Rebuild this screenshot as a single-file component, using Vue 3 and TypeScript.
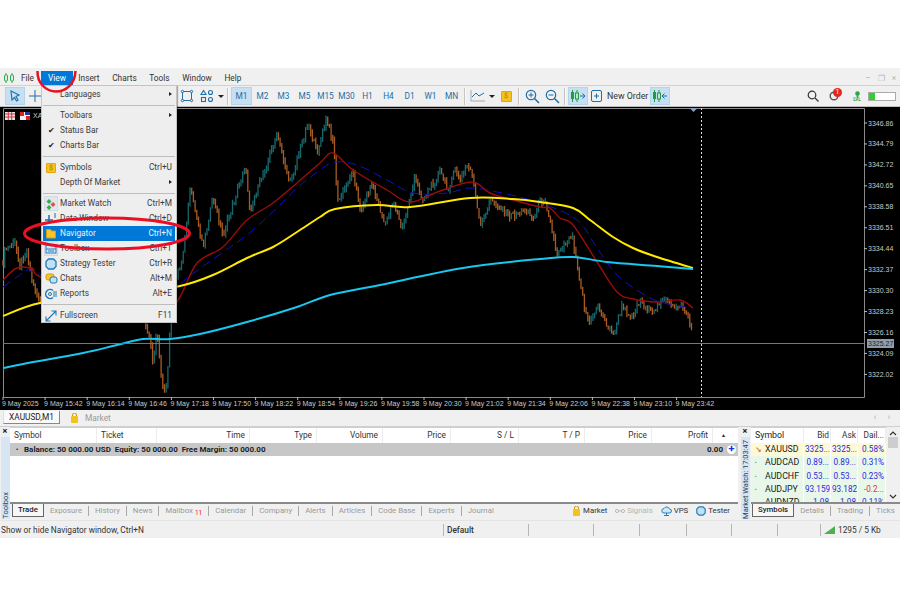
<script setup lang="ts">
type P = [number, number];

const pricePath: P[] = [[3,262],[5,250],[15,243],[20,265],[27,250],[33,285],[40,300],[90,305],[140,312],[150,340],[153,362],[157,330],[162,385],[167,390],[170,325],[178,270],[182,262],[190,190],[203,245],[213,198],[223,236],[245,165],[250,210],[277,135],[290,183],[308,122],[317,153],[326,120],[333,140],[338,203],[353,170],[360,210],[372,184],[385,226],[393,200],[402,230],[415,178],[423,200],[440,171],[447,190],[455,170],[460,180],[467,165],[472,172],[480,228],[490,200],[510,216],[527,210],[533,220],[538,204],[545,198],[557,253],[572,234],[577,263],[585,310],[590,325],[597,305],[613,336],[622,307],[632,316],[640,300],[653,315],[662,296],[672,308],[680,304],[688,315],[693,340]];

function interp(path: P[], x: number): number {
  for (let i = 1; i < path.length; i++) {
    if (x <= path[i][0]) {
      const [x0, y0] = path[i - 1];
      const [x1, y1] = path[i];
      return y0 + ((y1 - y0) * (x - x0)) / (x1 - x0);
    }
  }
  return path[path.length - 1][1];
}
function noise(n: number): number {
  const v = Math.sin(n * 12.9898) * 43758.5453;
  return v - Math.floor(v);
}
let upPath = '';
let downPath = '';
let prev = interp(pricePath, 3);
let idx = 0;
for (let x = 3; x <= 693; x += 1.7) {
  idx++;
  const close = interp(pricePath, x) + (noise(idx) - 0.5) * 7;
  const hi = Math.min(prev, close) - noise(idx + 500) * 4;
  const lo = Math.max(prev, close) + noise(idx + 900) * 4;
  const px = x.toFixed(1);
  const seg = `M${px} ${hi.toFixed(1)}V${lo.toFixed(1)}`;
  if (close < prev) upPath += seg;
  else downPath += seg;
  prev = close;
}

function smooth(p: P[]): string {
  let d = `M${p[0][0]} ${p[0][1]}`;
  for (let i = 0; i < p.length - 1; i++) {
    const a = p[Math.max(i - 1, 0)];
    const b = p[i];
    const c = p[i + 1];
    const e = p[Math.min(i + 2, p.length - 1)];
    const c1x = b[0] + (c[0] - a[0]) / 6;
    const c1y = b[1] + (c[1] - a[1]) / 6;
    const c2x = c[0] - (e[0] - b[0]) / 6;
    const c2y = c[1] - (e[1] - b[1]) / 6;
    d += `C${c1x.toFixed(1)} ${c1y.toFixed(1)} ${c2x.toFixed(1)} ${c2y.toFixed(1)} ${c[0]} ${c[1]}`;
  }
  return d;
}
const yellow = smooth([[3,316],[40,303],[100,296],[140,291],[180,286],[213,275],[247,258],[273,247],[297,232],[320,217],[335,209],[377,205],[410,207],[470,198],[513,199],[540,202],[573,208],[590,220],[613,237],[633,248],[657,257],[693,268]]);
const cyan = smooth([[3,368],[33,362],[83,353],[117,345],[143,339],[170,339],[200,334],[247,322],[297,307],[330,295],[380,285],[463,268],[540,259],[573,257],[607,262],[657,266],[693,269]]);
const red = smooth([[3,280],[17,268],[33,269],[40,277],[100,305],[160,310],[178,300],[197,263],[223,247],[247,220],[273,203],[297,183],[320,163],[333,153],[353,170],[387,190],[410,202],[440,191],[472,182],[490,193],[513,200],[540,207],[550,208],[560,218],[573,225],[597,262],[617,292],[633,299],[657,302],[680,300],[693,308]]);
const blue = smooth([[3,287],[17,277],[28,270],[40,275],[100,300],[160,300],[187,278],[223,252],[247,235],[277,208],[297,188],[320,170],[335,162],[357,165],[387,180],[413,193],[447,193],[470,188],[497,192],[540,203],[577,220],[597,248],[617,275],[640,292],[660,302],[687,307]]);

const prices = ['3346.86','3344.79','3342.72','3340.65','3338.58','3336.51','3334.44','3332.37','3330.30','3328.23','3326.16','3324.09','3322.02'].map((t, i) => ({ t, y: 123 + i * 20.95 }));
const times = ['9 May 2025','9 May 15:42','9 May 16:14','9 May 16:46','9 May 17:18','9 May 17:50','9 May 18:22','9 May 18:54','9 May 19:26','9 May 19:58','9 May 20:30','9 May 21:02','9 May 21:34','9 May 22:06','9 May 22:38','9 May 23:10','9 May 23:42'].map((t, i) => ({ t, x: 3 + i * 42.1 }));

const menus = ['File', 'View', 'Insert', 'Charts', 'Tools', 'Window', 'Help'];
const frames = ['M1','M2','M3','M5','M15','M30','H1','H4','D1','W1','MN'];

const tradeCols = [
  { t: 'Symbol', w: 87, left: true }, { t: 'Ticket', w: 60, left: true }, { t: 'Time', w: 93 }, { t: 'Type', w: 67 },
  { t: 'Volume', w: 66 }, { t: 'Price', w: 68 }, { t: 'S / L', w: 68 }, { t: 'T / P', w: 66 }, { t: 'Price', w: 67 }, { t: 'Profit', w: 61 },
];
const bottomTabs = ['Exposure','History','News','Mailbox','Calendar','Company','Alerts','Articles','Code Base','Experts','Journal'];
const watch = [
  { s: 'XAUUSD', b: '3325...', a: '3325...', d: '0.58%', hot: true },
  { s: 'AUDCAD', b: '0.89...', a: '0.89...', d: '0.31%' },
  { s: 'AUDCHF', b: '0.53...', a: '0.53...', d: '0.23%' },
  { s: 'AUDJPY', b: '93.159', a: '93.182', d: '-0.2...', neg: true },
  { s: 'AUDNZD', b: '1.08', a: '1.08', d: '0.11%' },
];
const statusCells = [65, 46, 47, 45, 46, 43];
</script>

<template>
  <div class="page">
    <div class="window">
      <div class="menubar">
        <svg class="logo" width="12" height="10" viewBox="0 0 12 10">
          <path d="M3 0V10M9 0V10" stroke="#2fae4a" stroke-width="1" />
          <rect x="1.5" y="2" width="3" height="6" rx="1" fill="#dff3e2" stroke="#2fae4a" />
          <rect x="7.5" y="2" width="3" height="6" rx="1" fill="#dff3e2" stroke="#2fae4a" />
        </svg>
        <span v-for="m in menus" :key="m" class="menu" :class="{ open: m === 'View', file: m === 'File' }">{{ m }}</span>
        <div class="win-ctrl">
          <span>–</span><span>❐</span><span>×</span>
        </div>
      </div>

      <div class="toolbar">
        <span class="tool on">
          <svg width="14" height="14" viewBox="0 0 14 14"><path d="M3 2l8 4-3 1.500L10 11l-1.500 1-2-3.500L4 11z" fill="none" stroke="#1f6fa8" stroke-width="1.100" /></svg>
        </span>
        <span class="tool">
          <svg width="14" height="14" viewBox="0 0 14 14"><path d="M7 1v12M1 7h12" stroke="#1f6fa8" stroke-width="1" /></svg>
        </span>
        <span class="tb-gap"></span>
        <span class="tool">
          <svg width="14" height="14" viewBox="0 0 14 14"><rect x="2.500" y="2.500" width="9" height="9" fill="none" stroke="#1f6fa8" /><g fill="#f0f0f0" stroke="#1f6fa8"><circle cx="2.500" cy="2.500" r="1.200" /><circle cx="11.500" cy="2.500" r="1.200" /><circle cx="2.500" cy="11.500" r="1.200" /><circle cx="11.500" cy="11.500" r="1.200" /></g></svg>
        </span>
        <span class="tool">
          <svg width="14" height="14" viewBox="0 0 14 14"><g fill="none" stroke="#1f6fa8" stroke-width="1.100"><path d="M3.500 1.500l2.500 4H1z" /><circle cx="10.500" cy="3.500" r="2" /><rect x="1.500" y="8.500" width="4" height="4" /><circle cx="10.500" cy="10.500" r="2" /></g></svg>
        </span>
        <span class="caret"></span>
        <span class="sep"></span>
        <span v-for="f in frames" :key="f" class="tf" :class="{ on: f === 'M1' }">{{ f }}</span>
        <span class="sep"></span>
        <span class="tool">
          <svg width="16" height="14" viewBox="0 0 16 14"><path d="M1 1v11h14" fill="none" stroke="#a9a9a9" /><path d="M2 8l4-4 3 3 5-3" fill="none" stroke="#1f6fa8" /></svg>
        </span>
        <span class="caret"></span>
        <span class="tool">
          <span class="coin big">$</span>
        </span>
        <span class="sep"></span>
        <span class="tool">
          <svg width="15" height="15" viewBox="0 0 15 15"><circle cx="6" cy="6" r="4.700" fill="none" stroke="#1f6fa8" stroke-width="1.200" /><path d="M9.500 9.500l4.500 4.500" stroke="#1f6fa8" stroke-width="1.600" /><path d="M3.500 6h5M6 3.500v5" stroke="#1f6fa8" /></svg>
        </span>
        <span class="tool">
          <svg width="15" height="15" viewBox="0 0 15 15"><circle cx="6" cy="6" r="4.700" fill="none" stroke="#1f6fa8" stroke-width="1.200" /><path d="M9.500 9.500l4.500 4.500" stroke="#1f6fa8" stroke-width="1.600" /><path d="M3.500 6h5" stroke="#1f6fa8" /></svg>
        </span>
        <span class="sep"></span>
        <span class="tool on wide">
          <svg width="16" height="12" viewBox="0 0 16 12"><path d="M2.500 0v12M7 0v12" stroke="#1f9d45" /><rect x="1" y="2" width="3" height="7" fill="#1f9d45" /><rect x="5.500" y="3" width="3" height="6" fill="#bfe6c8" stroke="#1f9d45" /><path d="M10 6h5M12.500 3.500L15 6l-2.500 2.500" fill="none" stroke="#1f6fa8" /></svg>
        </span>
        <span class="tool small">
          <svg width="14" height="14" viewBox="0 0 14 14"><rect x="1.500" y="1.500" width="10" height="11" rx="1.500" fill="none" stroke="#1f6fa8" /><path d="M4 7h5M6.500 4.500v5" stroke="#1f6fa8" /></svg>
        </span>
        <span class="new-order">New Order</span>
        <span class="tool on wide">
          <svg width="16" height="12" viewBox="0 0 16 12"><path d="M2.500 0v12M7 0v12" stroke="#1f9d45" /><rect x="1" y="2" width="3" height="7" fill="#1f9d45" /><rect x="5.500" y="3" width="3" height="6" fill="#bfe6c8" stroke="#1f9d45" /><path d="M10 6h5M12.500 3.500L10 6l2.500 2.500" fill="none" stroke="#1f6fa8" /></svg>
        </span>
        <span class="tb-fill"></span>
        <svg class="t-search" width="12" height="12" viewBox="0 0 12 12"><circle cx="5" cy="5" r="3.800" fill="none" stroke="#333" stroke-width="1.200" /><path d="M8 8l3.500 3.500" stroke="#333" stroke-width="1.300" /></svg>
        <span class="bell">
          <svg width="10" height="10" viewBox="0 0 10 10"><circle cx="5" cy="5" r="3.800" fill="none" stroke="#555" stroke-width="1.400" /></svg>
          <b class="badge">1</b>
        </span>
        <span class="lvl">
          <svg width="9" height="7" viewBox="0 0 9 7"><circle cx="4.500" cy="2.500" r="2.300" fill="#27a745" /><path d="M3 4.500h3L4.500 7z" fill="#27a745" /></svg>
          <i>LVL</i>
        </span>
        <span class="battery"><span class="level"></span></span>
      </div>

      <svg class="chart" viewBox="0 107 900 303" width="900" height="303">
        <rect x="0" y="107" width="900" height="303" fill="#000" />
        <path d="M3.500 108.500H864.500V397.500H3.500Z" fill="none" stroke="#8a8a8a" />
        <path :d="upPath" stroke="#17686c" stroke-width="1.300" fill="none" />
        <path :d="downPath" stroke="#a85c24" stroke-width="1.300" fill="none" />
        <path :d="blue" fill="none" stroke="#1010c8" stroke-width="1" stroke-dasharray="9 5" />
        <path :d="red" fill="none" stroke="#9a0c0c" stroke-width="1.400" />
        <path :d="yellow" fill="none" stroke="#ffea00" stroke-width="2" />
        <path :d="cyan" fill="none" stroke="#18c8f0" stroke-width="2" />
        <path d="M3 343.500H864" stroke="#70777f" />
        <path d="M701.500 108V397" stroke="#ddd" stroke-dasharray="2 2" />
        <path d="M689.500 108h8l-4 4z" fill="#8aa2bc" />
        <rect x="5" y="112" width="10" height="8" fill="#e4e4ee" />
        <path d="M5 114h10M5 117h10M8.300 112v8M11.700 112v8" stroke="#d03a3a" stroke-width="1" />
        <rect x="20" y="112" width="10" height="8" fill="#f4f4f4" />
        <path d="M20 112h4v4h-4zM26 116h4v4h-4z" fill="#d22" />
        <path d="M25 112h5v3h-5z" fill="#2233a0" />
        <text x="33" y="118" class="ax">XA</text>
        <g v-for="p in prices" :key="p.t">
          <path :d="`M864 ${p.y}h3`" stroke="#bbb" />
          <text x="868" :y="p.y + 2.500" class="ax">{{ p.t }}</text>
        </g>
        <rect x="867" y="339" width="27" height="9" fill="#8da0b2" />
        <text x="868" y="345.500" class="ax tag">3325.27</text>
        <g v-for="t in times" :key="t.t">
          <path :d="`M${t.x} 397v3`" stroke="#bbb" />
          <text :x="t.x - 1" y="405.500" class="ax">{{ t.t }}</text>
        </g>
      </svg>

      <div class="chart-tabs">
        <span class="chart-tab">XAUUSD,M1</span>
        <svg class="bag" width="9" height="10" viewBox="0 0 9 10"><path d="M2.500 3V2a2 2 0 0 1 4 0v1" fill="none" stroke="#c79a10" /><rect x="1" y="3" width="7" height="7" rx="1" fill="#f5c21a" /></svg>
        <span class="market-tab">Market</span>
        <span class="tb-fill"></span>
        <span class="pager">‹</span><span class="pager">›</span>
      </div>

      <div class="panels">
        <div class="toolbox">
          <div class="strip">
            <b class="x">×</b>
            <div class="strip-label toolbox-label"><span>Toolbox</span></div>
          </div>
          <div class="trade">
            <div class="thead">
              <span v-for="(c, i) in tradeCols" :key="i" class="th" :class="{ left: c.left }" :style="{ width: c.w + 'px' }">{{ c.t }}</span>
              <span class="sort">▲</span>
            </div>
            <div class="balance">
              <span class="dot">•</span>
              <b>Balance: 50 000.00 USD&nbsp; Equity: 50 000.00&nbsp; Free Margin: 50 000.00</b>
              <span class="tb-fill"></span>
              <b class="zero">0.00</b>
              <span class="plus">+</span>
            </div>
            <div class="trade-empty"></div>
            <div class="tabs">
              <span class="tab-active">Trade</span>
              <template v-for="(t, i) in bottomTabs" :key="t">
                <span class="tab">{{ t }}<sub v-if="t === 'Mailbox'">11</sub></span>
                <span v-if="i < bottomTabs.length - 1" class="bar"></span>
              </template>
              <span class="tb-fill"></span>
              <span class="svc">
                <svg width="9" height="10" viewBox="0 0 9 10"><path d="M2.500 3V2a2 2 0 0 1 4 0v1" fill="none" stroke="#c79a10" /><rect x="1" y="3" width="7" height="7" rx="1" fill="#f5c21a" /></svg>
                Market
              </span>
              <span class="svc dim">
                <svg width="10" height="8" viewBox="0 0 10 8"><circle cx="2" cy="4" r="1.600" fill="none" stroke="#bbb" /><circle cx="8" cy="4" r="1.600" fill="none" stroke="#bbb" /><path d="M3.800 4h2.400" stroke="#bbb" /></svg>
                Signals
              </span>
              <span class="svc">
                <svg width="11" height="10" viewBox="0 0 11 10"><path d="M3 7a2.200 2.200 0 0 1 0-4.400A3 3 0 0 1 8.500 3a2 2 0 0 1 0 4z" fill="#cfe6f7" stroke="#2a7fb8" /><path d="M5.500 7v3M3 9.500h5" stroke="#2a7fb8" /></svg>
                VPS
              </span>
              <span class="svc">
                <svg width="10" height="10" viewBox="0 0 10 10"><path d="M3 .8h4L9.200 3v4L7 9.200H3L.8 7V3z" fill="#bfe0f5" stroke="#2a7fb8" stroke-width="1.200" /></svg>
                Tester
              </span>
            </div>
          </div>
        </div>

        <div class="watchbox">
          <div class="strip watch-strip">
            <b class="x">×</b>
            <div class="strip-label"><span>Market Watch: 17:03:47</span></div>
          </div>
          <div class="watch">
            <div class="watch-main">
              <div class="watch-table">
                <div class="wrow whead">
                  <span class="wc sym">Symbol</span><span class="wc num">Bid</span><span class="wc num">Ask</span><span class="wc num">Dail...</span>
                </div>
                <div v-for="r in watch" :key="r.s" class="wrow" :class="{ hot: r.hot }">
                  <span class="wc sym">
                    <i v-if="r.hot" class="arrow">↘</i><i v-else class="mark">▪</i>{{ r.s }}
                  </span>
                  <span class="wc num val">{{ r.b }}</span>
                  <span class="wc num val">{{ r.a }}</span>
                  <span class="wc num val" :class="{ neg: r.neg }">{{ r.d }}</span>
                </div>
              </div>
              <div class="scroll">
                <svg width="8" height="5" viewBox="0 0 8 5"><path d="M1 4l3-3 3 3" fill="none" stroke="#333" stroke-width="1.200" /></svg>
                <span class="thumb"></span>
                <span class="tb-fill"></span>
                <svg width="8" height="5" viewBox="0 0 8 5"><path d="M1 1l3 3 3-3" fill="none" stroke="#333" stroke-width="1.200" /></svg>
              </div>
            </div>
            <div class="tabs watch-tabs">
              <span class="tab-active">Symbols</span>
              <span class="tab">Details</span><span class="bar"></span>
              <span class="tab">Trading</span><span class="bar"></span>
              <span class="tab">Ticks</span>
            </div>
          </div>
        </div>
      </div>

      <div class="status">
        <span class="status-msg">Show or hide Navigator window, Ctrl+N</span>
        <span class="cell default-cell">Default</span>
        <span v-for="(w, i) in statusCells" :key="i" class="cell" :style="{ width: w + 'px' }"></span>
        <span class="cell conn">
          <svg width="11" height="8" viewBox="0 0 11 8"><path d="M0 8L11 0v8z" fill="#4fb04f" /></svg>
          1295 / 5 Kb
        </span>
      </div>

      <div class="dropdown">
        <div class="mi sub">Languages</div>
        <div class="ms"></div>
        <div class="mi sub">Toolbars</div>
        <div class="mi"><span class="ic check">✔</span>Status Bar</div>
        <div class="mi"><span class="ic check">✔</span>Charts Bar</div>
        <div class="ms last"></div>
        <div class="mi"><span class="ic"><span class="coin">$</span></span>Symbols<em>Ctrl+U</em></div>
        <div class="mi sub">Depth Of Market</div>
        <div class="ms"></div>
        <div class="mi"><span class="ic boxed"><svg width="12" height="12" viewBox="0 0 12 12"><path d="M4 1l2.500 2.500L4 6 1.500 3.500z" fill="#2fae4a" /><path d="M8 4l2.500 2.500L8 9 5.500 6.500z" fill="#e0504a" /><path d="M4 7l2.500 2.500L4 12 1.500 9.500z" fill="#2fae4a" /></svg></span>Market Watch<em>Ctrl+M</em></div>
        <div class="mi"><span class="ic"><svg width="12" height="12" viewBox="0 0 12 12"><path d="M4 2v9M0 7h8" stroke="#1f6fa8" stroke-width="1.500" /><path d="M10 0v5" stroke="#1f6fa8" /></svg></span>Data Window<em>Ctrl+D</em></div>
        <div class="mi active"><span class="ic"><svg width="12" height="11" viewBox="0 0 12 11"><path d="M1.500 1.500h4l1 1.500h4v7h-9z" fill="#f7c52b" stroke="#d59c0e" /></svg></span>Navigator<em>Ctrl+N</em></div>
        <div class="mi"><span class="ic boxed"><svg width="12" height="10" viewBox="0 0 12 10"><rect x="1" y="1" width="10" height="8" fill="#cfe6f7" stroke="#2a7fb8" /><path d="M1 5h10M3 7h6" stroke="#2a7fb8" /></svg></span>Toolbox<em>Ctrl+T</em></div>
        <div class="mi"><span class="ic"><svg width="12" height="12" viewBox="0 0 12 12"><path d="M3.500 1h5L11 3.500v5L8.500 11h-5L1 8.500v-5z" fill="#bfe0f5" stroke="#1f7ab5" stroke-width="1.300" /></svg></span>Strategy Tester<em>Ctrl+R</em></div>
        <div class="mi"><span class="ic"><svg width="13" height="11" viewBox="0 0 13 11"><rect x="1" y="1" width="8" height="6" rx="2" fill="#f7c52b" stroke="#d59c0e" /><rect x="5" y="4" width="7" height="6" rx="2" fill="#bfe0f5" stroke="#1f7ab5" /></svg></span>Chats<em>Alt+M</em></div>
        <div class="mi"><span class="ic"><svg width="12" height="12" viewBox="0 0 12 12"><path d="M8 2.500A4.500 4.500 0 1 0 8 9.500" fill="none" stroke="#1f7ab5" stroke-width="1.500" /><circle cx="5" cy="6" r="1.500" fill="none" stroke="#1f7ab5" /><path d="M8 4h4M8 6h4M8 8h4" stroke="#1f7ab5" /></svg></span>Reports<em>Alt+E</em></div>
        <div class="ms last"></div>
        <div class="mi"><span class="ic"><svg width="12" height="12" viewBox="0 0 12 12"><path d="M1 11L11 1M6.500 1H11v4.500M1 6.500V11h4.500" fill="none" stroke="#1f7ab5" stroke-width="1.100" /></svg></span>Fullscreen<em>F11</em></div>
      </div>

      <svg class="marks" width="900" height="300" viewBox="0 66 900 300">
        <path d="M37.500 71C37 83 46 91.500 56 91.500S75 84 75.500 71" fill="none" stroke="#ea0f25" stroke-width="2.500" />
        <ellipse cx="107" cy="233.500" rx="82.500" ry="15.500" fill="none" stroke="#ea0f25" stroke-width="3" />
      </svg>
    </div>
  </div>
</template>

<style scoped>
.page {
  width: 900px;
  height: 600px;
  background: #fff;
  padding-top: 68px;
  box-sizing: border-box;
  overflow: hidden;
  font-family: Roboto, "Liberation Sans", sans-serif;
  font-size: 8.300px;
  color: #333;
}
.window {
  position: relative;
  height: 470px;
  background: #f0f0f0;
  display: flex;
  flex-direction: column;
}
.menubar {
  height: 17px;
  display: flex;
  align-items: center;
  padding-left: 3px;
  flex: none;
}
.logo { flex: none; margin-right: 6px; margin-top: 2px; }
.menu { padding: 0 6.300px; height: 14px; line-height: 15px; margin-top: 3px; }
.menu.file { padding: 0 7px 0 0; }
.menu.open { background: #0078d7; color: #fff; width: 18px; padding: 0 7px; text-align: center; margin-right: -1px; }
.win-ctrl { margin-left: auto; display: flex; gap: 5px; color: #b5b5b5; padding-right: 2px; margin-top: 3px; }
.win-ctrl span { width: 8px; text-align: center; }
.toolbar {
  height: 20px;
  flex: none;
  display: flex;
  align-items: center;
  padding: 0 4px 0 5px;
  border-top: 1px solid #d2d2d2;
  border-bottom: 1px solid #bdbdbd;
}
.tool { width: 20px; height: 18px; display: flex; align-items: center; justify-content: center; flex: none; }
.tool.on { background: #c6dff3; box-shadow: inset 0 0 0 1px #b4d4ec; }
.tool.wide { width: 20px; }
.tool.small { width: 17px; }
.tb-gap { width: 132px; flex: none; }
.tb-fill { flex: 1; }
.caret { width: 0; height: 0; border: 3px solid transparent; border-top: 3.500px solid #222; border-bottom: 0; margin: 0 1px; flex: none; }
.sep { width: 1px; height: 17px; background: #c4c4c4; margin: 0 3px 0 2px; flex: none; box-shadow: 1px 0 0 #fafafa; }
.tf { width: 21px; height: 18px; line-height: 18px; text-align: center; color: #1c6ea4; flex: none; }
.tf.on { background: #c6dff3; box-shadow: inset 0 0 0 1px #b4d4ec; }
.coin { display: block; width: 10px; height: 10px; line-height: 9px; background: #f7c21c; border: 1px solid #e2a60a; color: #a8730a; font-size: 7px; text-align: center; border-radius: 1px; box-sizing: border-box; }
.coin.big { width: 11px; height: 11px; line-height: 9px; }
.new-order { flex: none; width: 40px; margin: 0 3px 0 2px; white-space: nowrap; font-size: 8.800px; }
.t-search { flex: none; }
.bell { position: relative; width: 10px; height: 10px; margin-left: 10px; flex: none; display: block; }
.badge { position: absolute; left: 4px; top: -3px; width: 9px; height: 9px; line-height: 9px; border-radius: 50%; background: #e5281d; color: #fff; font-size: 7px; text-align: center; font-weight: 400; }
.lvl { flex: none; margin-left: 13px; width: 10px; display: flex; flex-direction: column; align-items: center; color: #27a745; }
.lvl i { font-size: 4.500px; font-style: normal; line-height: 4px; font-weight: 700; }
.battery { flex: none; width: 26px; height: 7px; margin-left: 6px; background: #fff; border: 1px solid #aaa; display: block; }
.level { display: block; width: 6px; height: 7px; background: #2fd12f; }
.chart { display: block; flex: none; }
.ax { font-family: "Liberation Sans", sans-serif; font-size: 7px; fill: #c9c9c9; }
.ax.tag { fill: #222; }
.chart-tabs { height: 17px; flex: none; display: flex; align-items: flex-start; padding: 1px 4px 0 3px; border-bottom: 1px solid #cfcfcf; box-sizing: border-box; }
.chart-tab { width: 57px; height: 13px; line-height: 13px; text-align: center; background: #fafafa; color: #222; border: 1px solid #888; border-width: 0 1px 1px 1px; border-left-color: #ddd; box-sizing: border-box; flex: none; }
.bag { flex: none; margin: 2px 0 0 10px; }
.market-tab { margin-left: 6px; color: #999; line-height: 14px; }
.pager { width: 14px; text-align: center; color: #aaa; line-height: 13px; }
.panels { height: 92px; flex: none; display: flex; }
.toolbox { width: 738px; display: flex; flex: none; }
.watchbox { flex: 1; display: flex; margin-left: 2px; }
.strip { width: 10px; flex: none; display: flex; flex-direction: column; align-items: center; }
.x { height: 10px; line-height: 9px; font-size: 9px; color: #222; flex: none; }
.strip-label { flex: 1; width: 9px; background: #d8e6f3; display: flex; flex-direction: column; justify-content: flex-end; align-items: center; overflow: hidden; }
.strip-label span { writing-mode: vertical-rl; transform: rotate(180deg); font-size: 7.500px; line-height: 9px; color: #2c4050; white-space: nowrap; }
.trade { flex: 1; display: flex; flex-direction: column; min-width: 0; }
.thead { height: 16px; background: #fff; border-top: 1px solid #cfcfcf; box-sizing: border-box; display: flex; flex: none; }
.th { padding: 0 4px; box-sizing: border-box; text-align: right; line-height: 15px; border-right: 1px solid #ececec; flex: none; }
.th.left { text-align: left; }
.sort { font-size: 5px; line-height: 15px; margin-left: 8px; color: #222; }
.balance { height: 13px; background: #c7c7c7; display: flex; align-items: center; flex: none; color: #1d1d1d; padding-right: 2px; font-size: 8px; }
.balance b { font-weight: 700; white-space: pre; }
.dot { width: 14px; text-align: center; flex: none; }
.zero { margin-right: 4px; }
.plus { width: 9px; height: 9px; line-height: 8px; border-radius: 50%; background: #fff; color: #1a2fe0; text-align: center; font-size: 11px; font-weight: 700; }
.trade-empty { flex: 1; background: #fff; }
.tabs { height: 15px; flex: none; display: flex; align-items: flex-start; border-top: 2px solid #8a8a8a; box-sizing: border-box; padding-left: 2px; color: #9a9a9a; margin-bottom: 2px; font-size: 7.800px; }
.tab-active { padding: 0 5px; height: 12px; line-height: 12px; background: #f7f7f7; color: #222; border: 1px solid #666; border-top: 0; box-sizing: content-box; font-weight: 500; flex: none; }
.tab { margin-left: 6px; line-height: 13px; white-space: nowrap; flex: none; }
.tab sub { color: #e01818; font-size: 6.500px; margin-left: 2px; vertical-align: -2px; line-height: 0; }
.bar { width: 1px; height: 10px; margin: 2px 0 0 6px; background: #a8a8a8; flex: none; }
.svc { display: flex; align-items: center; gap: 2px; margin-right: 8px; line-height: 13px; color: #333; height: 13px; white-space: nowrap; flex: none; }
.svc.dim { color: #b5b5b5; }
.watchbox .x { color: #222; }
.watch { flex: 1; min-width: 0; display: flex; flex-direction: column; margin-left: 1px; }
.watch-main { flex: 1; display: flex; min-height: 0; }
.watch-table { width: 135px; overflow: hidden; background: #fff; flex: none; }
.wrow { height: 13.300px; display: grid; grid-template-columns: 53px 27px 27px 28px; line-height: 13px; background: #e8f7e9; }
.wrow.hot { background: #fdf8d6; }
.whead { height: 16px; line-height: 15px; background: #fff; border-top: 1px solid #cfcfcf; box-sizing: border-box; }
.wc { white-space: nowrap; overflow: hidden; padding: 0 1px; border-right: 1px solid #fff; box-sizing: border-box; }
.sym { color: #222; padding-left: 4px; font-size: 8.800px; }
.whead .wc { border-right: 1px solid #ececec; }
.num { text-align: right; }
.val { color: #2a2ae0; font-size: 8.200px; }
.val.neg { color: #e83030; }
.arrow { color: #e53b1d; font-style: normal; display: inline-block; width: 10px; font-size: 8px; }
.mark { color: #7da08a; font-style: normal; display: inline-block; width: 10px; font-size: 5px; vertical-align: 1px; }
.scroll { flex: 1; background: #f0f0f0; display: flex; flex-direction: column; align-items: center; padding: 4px 0 3px; box-sizing: border-box; }
.thumb { width: 10px; height: 11px; background: #cdcdcd; margin-top: 1px; flex: none; }
.watch-tabs { padding-left: 1px; }
.status { height: 18px; flex: none; display: flex; align-items: center; margin-top: 1px; border-top: 1px solid #e4e4e4; box-sizing: border-box; color: #333; }
.status-msg { width: 443px; padding-left: 1px; white-space: nowrap; flex: none; box-sizing: border-box; }
.cell { height: 12px; line-height: 12px; border-left: 1px solid #b5b5b5; box-sizing: border-box; flex: none; padding-left: 3px; }
.default-cell { width: 85px; font-weight: 500; }
.conn { display: flex; align-items: center; gap: 3px; white-space: nowrap; padding-left: 3px; }
.dropdown {
  position: absolute;
  left: 41px;
  top: 17px;
  width: 136px;
  height: 238px;
  box-sizing: border-box;
  padding-top: 1px;
  background: #eeeeee;
  border: 1px solid #c4c4c4;
  box-shadow: 1px 1px 1px rgba(0,0,0,.3);
  color: #3c3c3c;
}
.mi { height: 15px; line-height: 15px; padding-left: 17px; position: relative; white-space: nowrap; margin: 0 1px; }
.mi em { position: absolute; right: 3px; font-style: normal; }
.mi.sub::after { content: ""; position: absolute; right: 3px; top: 5px; border-left: 3.500px solid #222; border-top: 2.500px solid transparent; border-bottom: 2.500px solid transparent; }
.mi.active { background: #0078d7; color: #e8f2fb; }
.ic { position: absolute; left: 1px; top: 0; width: 14px; height: 15px; display: flex; align-items: center; justify-content: center; }
.ic.boxed { background: #e0e6ec; box-shadow: inset 0 0 0 1px #d2dae2; }
.check { color: #222; font-size: 7.500px; }
.ms { height: 6px; position: relative; }
.ms.last { height: 7px; }
.ms::after { content: ""; position: absolute; left: 1px; right: 1px; top: 2.500px; height: 1px; background: #bdbdbd; }
.marks { position: absolute; left: 0; top: -2px; pointer-events: none; }
</style>

<style>
body { margin: 0; background: #fff; }
</style>
